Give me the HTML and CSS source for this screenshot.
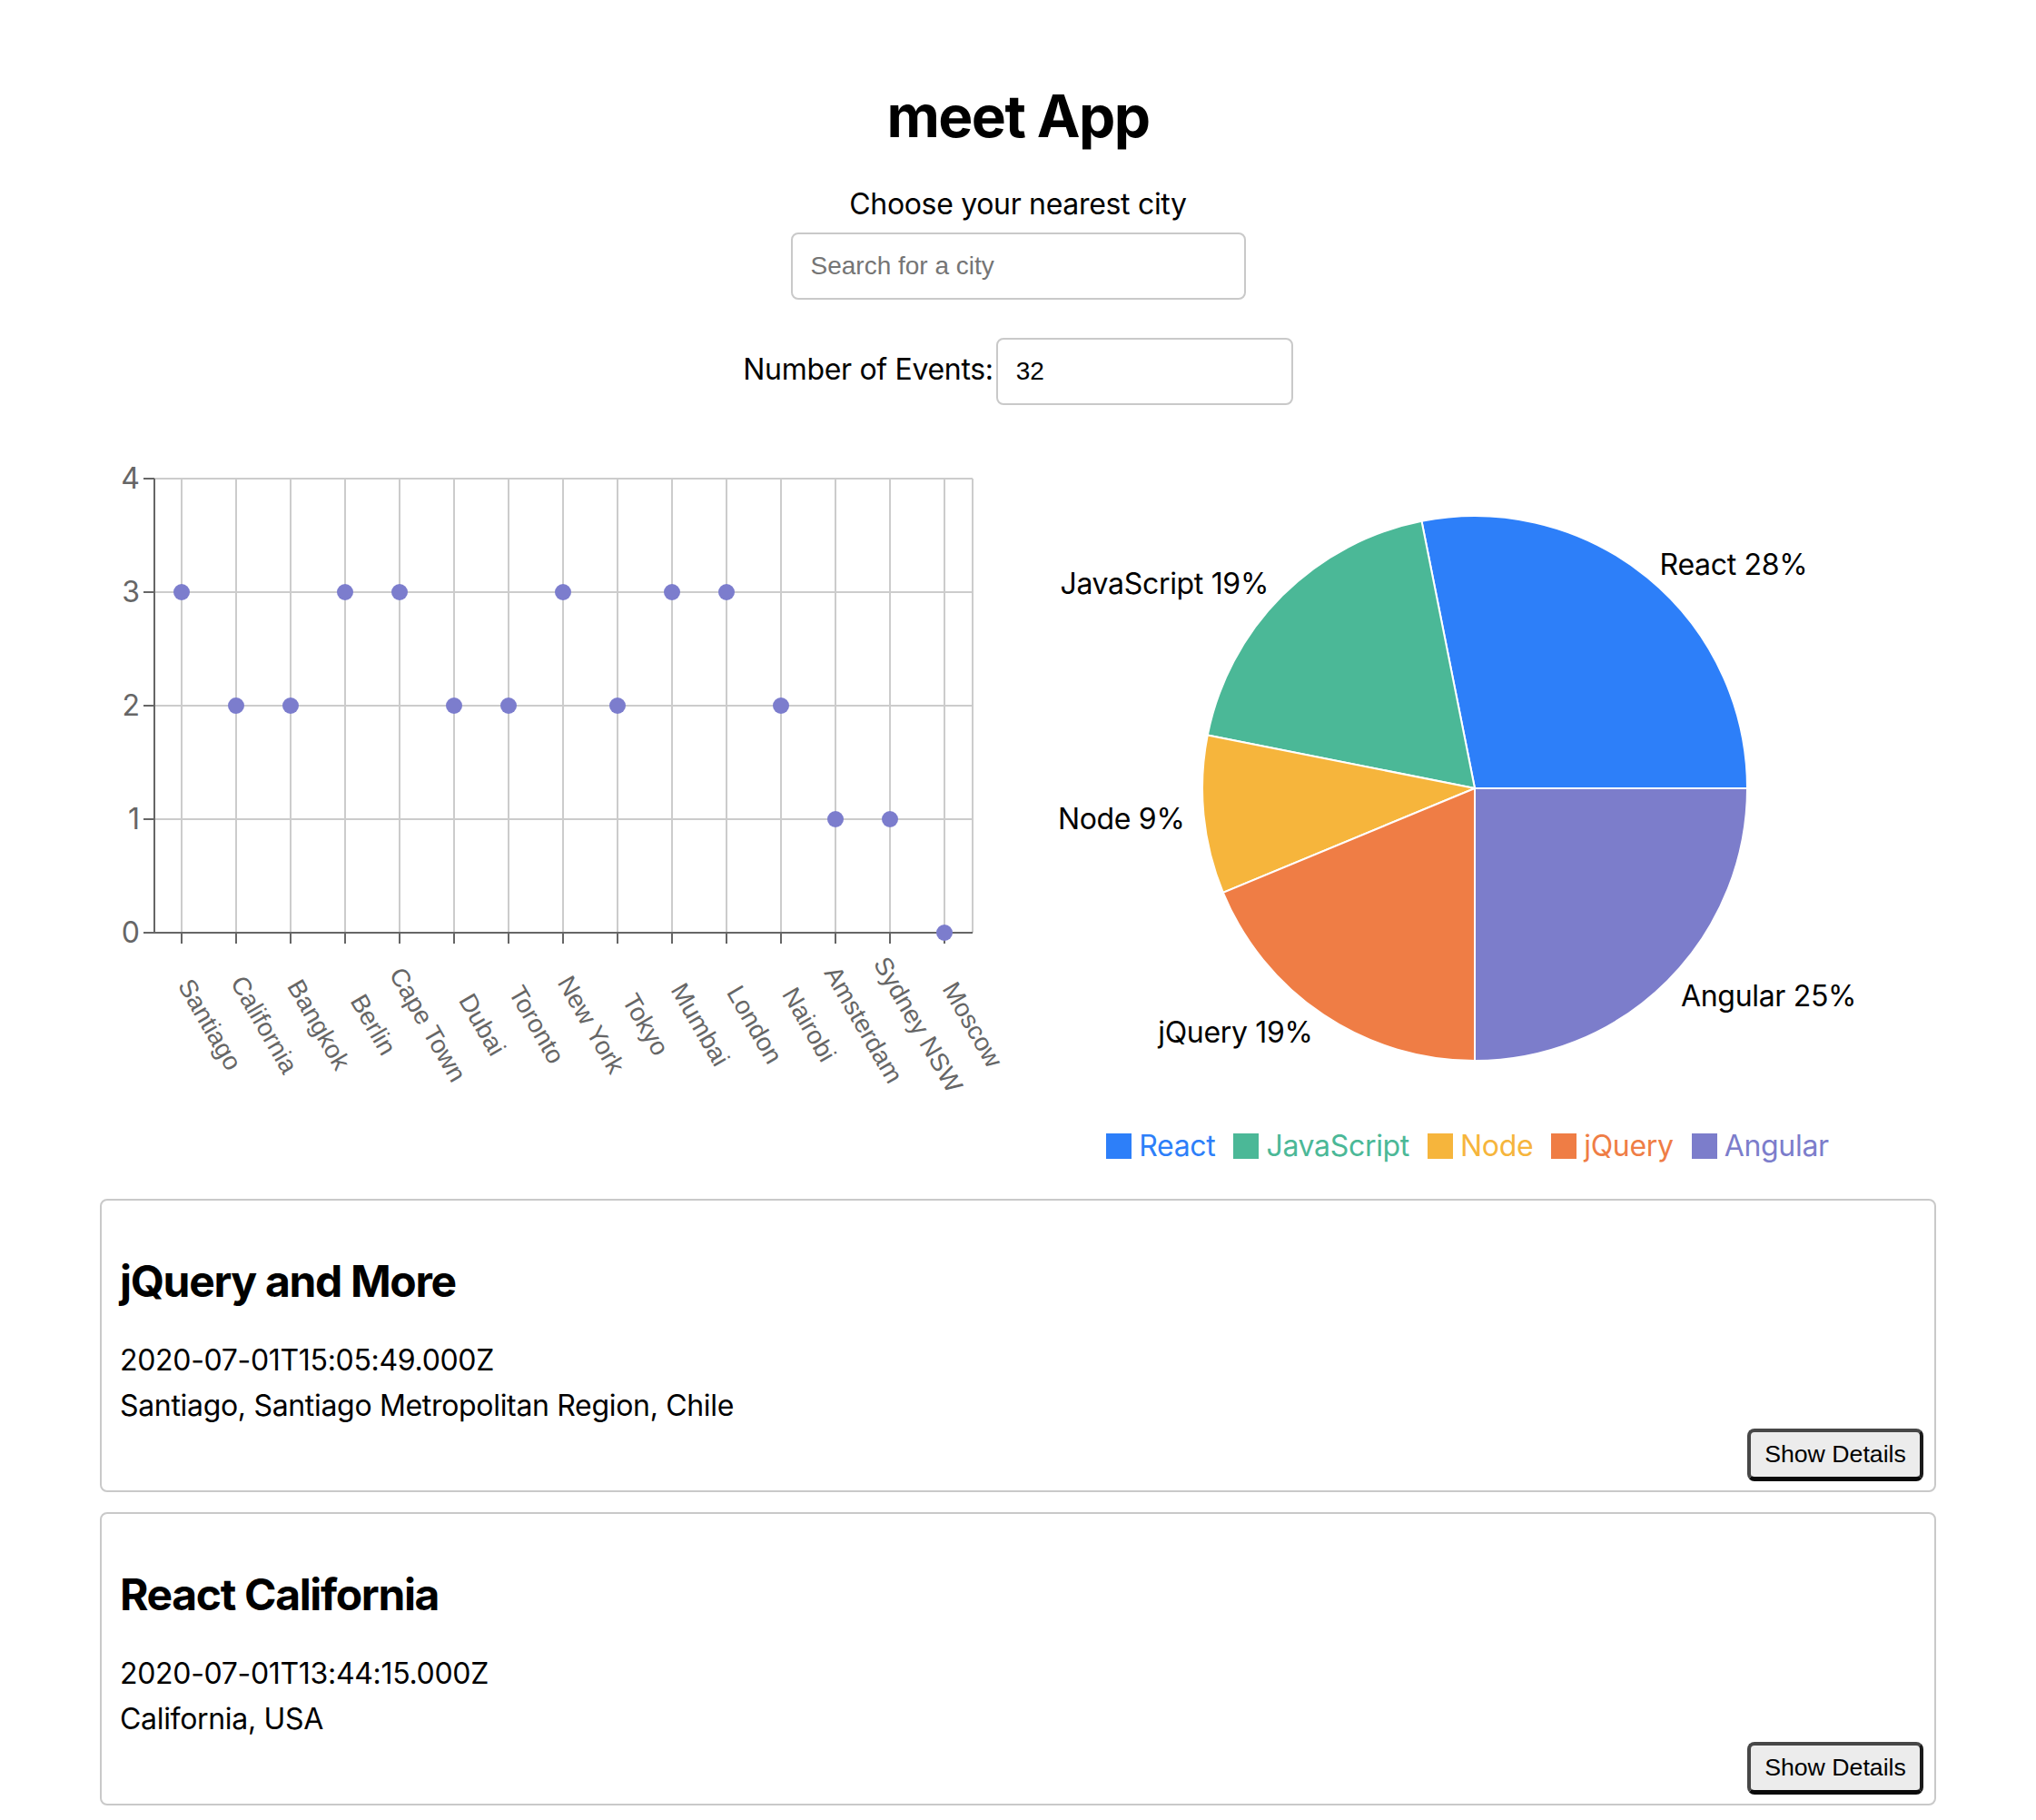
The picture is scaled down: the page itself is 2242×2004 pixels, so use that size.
FILE: index.html
```html
<!DOCTYPE html>
<html lang="en">
<head>
<meta charset="utf-8">
<title>meet App</title>
<link rel="stylesheet" href="styles.css">
</head>
<body>
<div class="app">
  <h1 class="title">meet App</h1>

  <div class="city-search">
    <label class="search-label" for="city">Choose your nearest city</label>
    <input id="city" class="city-input" type="text" placeholder="Search for a city">
  </div>

  <div class="number-row">
    <label class="number-label" for="num">Number of Events:</label>
    <input id="num" class="number-input" type="text" value="32">
  </div>

  <div class="charts">
    <svg class="scatter" width="1000" height="760" viewBox="0 0 1000 760">
      <g class="grid">
        <line x1="70" y1="57" x2="971" y2="57"/>
        <line x1="70" y1="182" x2="971" y2="182"/>
        <line x1="70" y1="307" x2="971" y2="307"/>
        <line x1="70" y1="432" x2="971" y2="432"/>
        <line x1="100" y1="57" x2="100" y2="557"/>
        <line x1="160" y1="57" x2="160" y2="557"/>
        <line x1="220" y1="57" x2="220" y2="557"/>
        <line x1="280" y1="57" x2="280" y2="557"/>
        <line x1="340" y1="57" x2="340" y2="557"/>
        <line x1="400" y1="57" x2="400" y2="557"/>
        <line x1="460" y1="57" x2="460" y2="557"/>
        <line x1="520" y1="57" x2="520" y2="557"/>
        <line x1="580" y1="57" x2="580" y2="557"/>
        <line x1="640" y1="57" x2="640" y2="557"/>
        <line x1="700" y1="57" x2="700" y2="557"/>
        <line x1="760" y1="57" x2="760" y2="557"/>
        <line x1="820" y1="57" x2="820" y2="557"/>
        <line x1="880" y1="57" x2="880" y2="557"/>
        <line x1="940" y1="57" x2="940" y2="557"/>
        <line x1="971" y1="57" x2="971" y2="557"/>
      </g>
      <g class="axis">
        <line x1="70" y1="57" x2="70" y2="558"/>
        <line x1="69" y1="557" x2="971" y2="557"/>
        <line x1="58" y1="57" x2="70" y2="57"/>
        <line x1="58" y1="182" x2="70" y2="182"/>
        <line x1="58" y1="307" x2="70" y2="307"/>
        <line x1="58" y1="432" x2="70" y2="432"/>
        <line x1="58" y1="557" x2="70" y2="557"/>
        <line x1="100" y1="557" x2="100" y2="569"/>
        <line x1="160" y1="557" x2="160" y2="569"/>
        <line x1="220" y1="557" x2="220" y2="569"/>
        <line x1="280" y1="557" x2="280" y2="569"/>
        <line x1="340" y1="557" x2="340" y2="569"/>
        <line x1="400" y1="557" x2="400" y2="569"/>
        <line x1="460" y1="557" x2="460" y2="569"/>
        <line x1="520" y1="557" x2="520" y2="569"/>
        <line x1="580" y1="557" x2="580" y2="569"/>
        <line x1="640" y1="557" x2="640" y2="569"/>
        <line x1="700" y1="557" x2="700" y2="569"/>
        <line x1="760" y1="557" x2="760" y2="569"/>
        <line x1="820" y1="557" x2="820" y2="569"/>
        <line x1="880" y1="557" x2="880" y2="569"/>
        <line x1="940" y1="557" x2="940" y2="569"/>
      </g>
      <g class="y-label">
        <text x="54" y="57" dy="0.355em">4</text>
        <text x="54" y="182" dy="0.355em">3</text>
        <text x="54" y="307" dy="0.355em">2</text>
        <text x="54" y="432" dy="0.355em">1</text>
        <text x="54" y="557" dy="0.355em">0</text>
      </g>
      <g class="x-label">
        <text x="140" y="653" dy="0.71em" transform="rotate(60 140 653)">Santiago</text>
        <text x="200" y="653" dy="0.71em" transform="rotate(60 200 653)">California</text>
        <text x="260" y="653" dy="0.71em" transform="rotate(60 260 653)">Bangkok</text>
        <text x="320" y="653" dy="0.71em" transform="rotate(60 320 653)">Berlin</text>
        <text x="380" y="653" dy="0.71em" transform="rotate(60 380 653)">Cape Town</text>
        <text x="440" y="653" dy="0.71em" transform="rotate(60 440 653)">Dubai</text>
        <text x="500" y="653" dy="0.71em" transform="rotate(60 500 653)">Toronto</text>
        <text x="560" y="653" dy="0.71em" transform="rotate(60 560 653)">New York</text>
        <text x="620" y="653" dy="0.71em" transform="rotate(60 620 653)">Tokyo</text>
        <text x="680" y="653" dy="0.71em" transform="rotate(60 680 653)">Mumbai</text>
        <text x="740" y="653" dy="0.71em" transform="rotate(60 740 653)">London</text>
        <text x="800" y="653" dy="0.71em" transform="rotate(60 800 653)">Nairobi</text>
        <text x="860" y="653" dy="0.71em" transform="rotate(60 860 653)">Amsterdam</text>
        <text x="920" y="653" dy="0.71em" transform="rotate(60 920 653)">Sydney NSW</text>
        <text x="980" y="653" dy="0.71em" transform="rotate(60 980 653)">Moscow</text>
      </g>
      <g class="dots">
        <circle cx="100" cy="182" r="9"/>
        <circle cx="160" cy="307" r="9"/>
        <circle cx="220" cy="307" r="9"/>
        <circle cx="280" cy="182" r="9"/>
        <circle cx="340" cy="182" r="9"/>
        <circle cx="400" cy="307" r="9"/>
        <circle cx="460" cy="307" r="9"/>
        <circle cx="520" cy="182" r="9"/>
        <circle cx="580" cy="307" r="9"/>
        <circle cx="640" cy="182" r="9"/>
        <circle cx="700" cy="182" r="9"/>
        <circle cx="760" cy="307" r="9"/>
        <circle cx="820" cy="432" r="9"/>
        <circle cx="880" cy="432" r="9"/>
        <circle cx="940" cy="557" r="9"/>
      </g>
    </svg>

    <div class="pie-col">
      <svg class="pie" width="1050" height="760" viewBox="0 0 1050 760">
        <g class="slices">
          <path class="s-react" d="M524 398 L824 398 A300 300 0 0 0 465.47 103.76 Z"/>
          <path class="s-js" d="M524 398 L465.47 103.76 A300 300 0 0 0 229.76 339.47 Z"/>
          <path class="s-node" d="M524 398 L229.76 339.47 A300 300 0 0 0 246.84 512.80 Z"/>
          <path class="s-jquery" d="M524 398 L246.84 512.80 A300 300 0 0 0 524 698 Z"/>
          <path class="s-angular" d="M524 398 L524 698 A300 300 0 0 0 824 398 Z"/>
        </g>
        <g class="pie-label">
          <text x="727.6" y="151" text-anchor="start">React 28%</text>
          <text x="297" y="172" text-anchor="end">JavaScript 19%</text>
          <text x="204.5" y="431" text-anchor="end">Node 9%</text>
          <text x="345.7" y="666" text-anchor="end">jQuery 19%</text>
          <text x="751" y="626" text-anchor="start">Angular 25%</text>
        </g>
      </svg>
      <ul class="legend">
        <li class="legend-item l-react"><span class="swatch"></span>React</li>
        <li class="legend-item l-js"><span class="swatch"></span>JavaScript</li>
        <li class="legend-item l-node"><span class="swatch"></span>Node</li>
        <li class="legend-item l-jquery"><span class="swatch"></span>jQuery</li>
        <li class="legend-item l-angular"><span class="swatch"></span>Angular</li>
      </ul>
    </div>
  </div>

  <ul class="event-list">
    <li class="event">
      <h2 class="event-title">jQuery and More</h2>
      <p class="event-date">2020-07-01T15:05:49.000Z</p>
      <p class="event-location">Santiago, Santiago Metropolitan Region, Chile</p>
      <button class="details-btn" type="button">Show Details</button>
    </li>
    <li class="event">
      <h2 class="event-title">React California</h2>
      <p class="event-date">2020-07-01T13:44:15.000Z</p>
      <p class="event-location">California, USA</p>
      <button class="details-btn" type="button">Show Details</button>
    </li>
  </ul>
</div>
</body>
</html>
```

FILE: styles.css
```css
html, body {
  margin: 0;
  padding: 0;
  background: #fff;
}

body {
  font-family: Inter, "Noto Sans", sans-serif;
  letter-spacing: -0.02em;
  color: #000;
}

.app {
  padding-top: 90px;
  text-align: center;
}

.title {
  margin: 0;
  font-size: 64px;
  line-height: 76px;
  font-weight: 700;
  letter-spacing: -0.025em;
}

.city-search {
  margin-top: 40px;
}

.search-label {
  display: block;
  font-size: 32px;
  line-height: 38px;
}

.city-input,
.number-input {
  box-sizing: border-box;
  height: 74px;
  border: 2px solid #c9c9c9;
  border-radius: 8px;
  padding: 0 20px;
  font-family: "Liberation Sans", Arial, sans-serif;
  font-size: 28px;
  letter-spacing: 0;
  color: #000;
  background: #fff;
  outline: none;
}

.city-input {
  display: block;
  width: 501px;
  margin: 12px auto 0;
}

.city-input::placeholder {
  color: #757575;
}

.number-row {
  margin-top: 42px;
  display: flex;
  justify-content: center;
  align-items: baseline;
  gap: 3px;
}

.number-label {
  font-size: 32px;
  line-height: 38px;
}

.number-input {
  width: 327px;
}

.charts {
  margin-top: 24px;
  display: flex;
  padding-left: 100px;
  text-align: left;
}

.scatter {
  display: block;
  overflow: visible;
  flex: none;
}

.grid line {
  stroke: #cccccc;
  stroke-width: 2;
}

.axis line {
  stroke: #666666;
  stroke-width: 2;
}

.y-label text {
  font-family: Inter, "Noto Sans", sans-serif;
  font-size: 32px;
  letter-spacing: 0;
  fill: #666666;
  text-anchor: end;
}

.x-label text {
  font-family: "Liberation Sans", Arial, sans-serif;
  font-size: 28px;
  letter-spacing: 0;
  fill: #666666;
  text-anchor: middle;
}

.dots circle {
  fill: #7c7dcd;
}

.pie-col {
  flex: none;
  width: 1050px;
}

.pie {
  display: block;
}

.slices path {
  stroke: #fff;
  stroke-width: 2;
}

.s-react { fill: #2d7ff9; }
.s-js { fill: #4bb897; }
.s-node { fill: #f6b53c; }
.s-jquery { fill: #ef7d45; }
.s-angular { fill: #7c7dcb; }

.pie-label text {
  font-size: 32px;
  fill: #000;
  dominant-baseline: central;
}

.legend {
  list-style: none;
  margin: 13px 0 0;
  padding: 0 18px 0 0;
  display: flex;
  justify-content: center;
  font-size: 32px;
  line-height: 38px;
}

.legend-item {
  display: flex;
  align-items: center;
  margin-right: 20px;
}

.legend-item:last-child {
  margin-right: 0;
}

.swatch {
  width: 28px;
  height: 28px;
  margin-right: 8px;
}

.l-react { color: #2d7ff9; }
.l-react .swatch { background: #2d7ff9; }
.l-js { color: #4bb897; }
.l-js .swatch { background: #4bb897; }
.l-node { color: #f6b53c; }
.l-node .swatch { background: #f6b53c; }
.l-jquery { color: #ef7d45; }
.l-jquery .swatch { background: #ef7d45; }
.l-angular { color: #7c7dcb; }
.l-angular .swatch { background: #7c7dcb; }

.event-list {
  list-style: none;
  margin: 39px 0 0;
  padding: 0;
  text-align: left;
}

.event {
  box-sizing: border-box;
  width: 2022px;
  margin: 0 auto;
  border: 2px solid #c9c9c9;
  border-radius: 8px;
  padding: 0 12px 10px 20px;
}

.event + .event {
  margin-top: 22px;
}

.event-title {
  margin: 60px 0 40px;
  font-size: 48px;
  line-height: 57px;
  font-weight: 700;
  letter-spacing: -0.028em;
}

.event-date,
.event-location {
  margin: 0;
  font-size: 32px;
  line-height: 37px;
}

.event-location {
  margin-top: 13px;
}

.details-btn {
  display: block;
  box-sizing: border-box;
  width: 194px;
  height: 58px;
  margin: 7px 0 0 auto;
  padding: 0;
  font-family: "Liberation Sans", Arial, sans-serif;
  font-size: 26.7px;
  letter-spacing: 0;
  color: #000;
  background: #ececec;
  border-style: solid;
  border-width: 4px 4px 5px 4px;
  border-color: #474747 #1a1a1a #0a0a0a #474747;
  border-radius: 8px;
}
```
